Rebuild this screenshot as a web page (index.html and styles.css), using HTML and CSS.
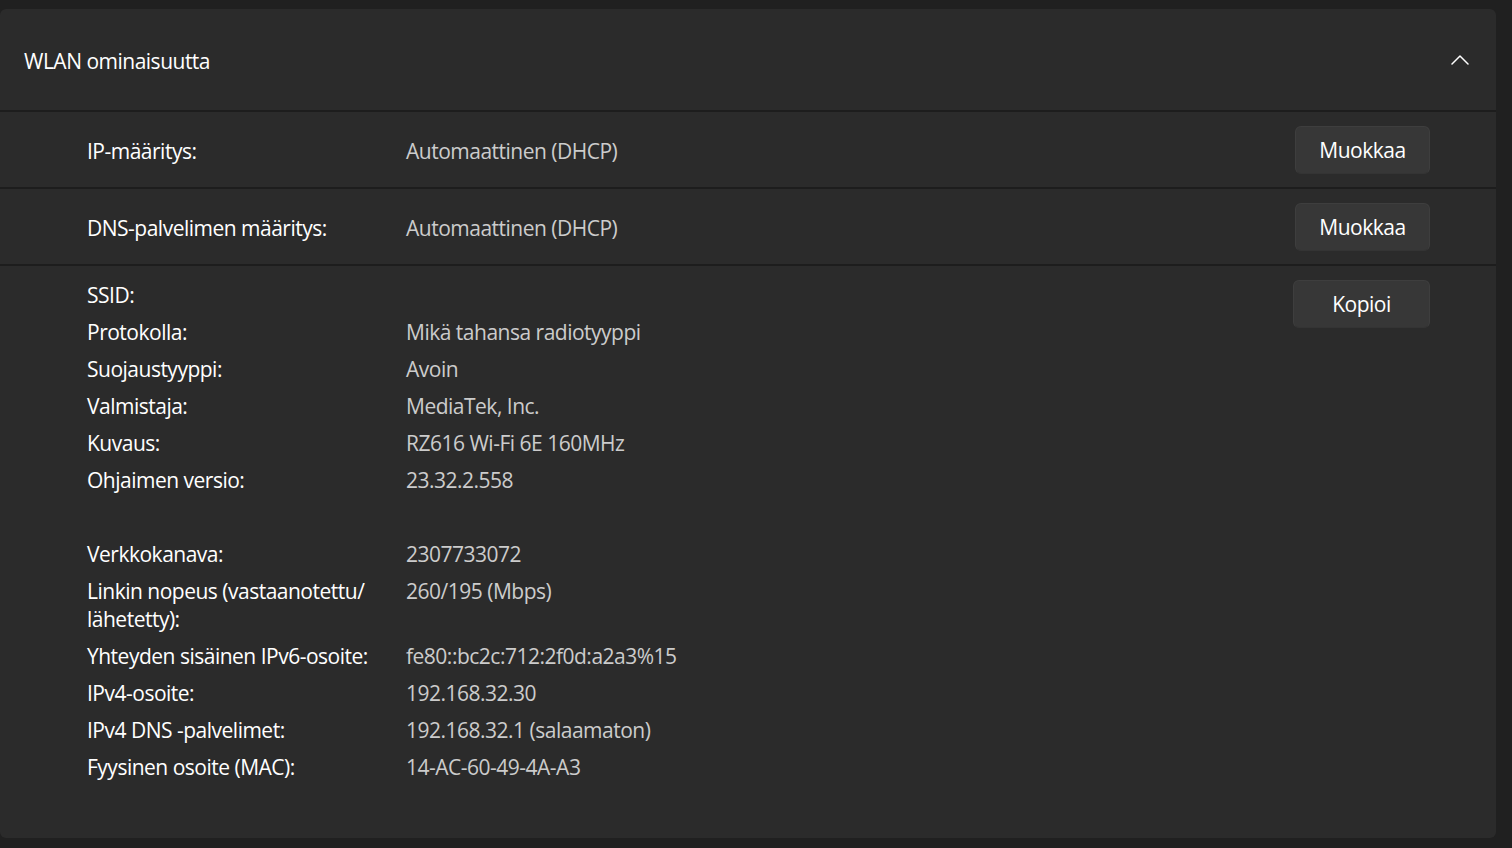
FILE: index.html
```html
<!DOCTYPE html>
<html lang="fi">
<head>
<meta charset="utf-8">
<title>WLAN ominaisuutta</title>
<link rel="stylesheet" href="styles.css">
</head>
<body>
<div class="card">
  <div class="header">
    <span class="title">WLAN ominaisuutta</span>
    <svg class="chevron" width="18" height="10" viewBox="0 0 18 10"><path d="M1 9 L9 1 L17 9" fill="none" stroke="#ffffff" stroke-width="1.5" stroke-linecap="round" stroke-linejoin="round"/></svg>
  </div>
  <div class="row">
    <span class="label">IP-määritys:</span>
    <span class="value">Automaattinen (DHCP)</span>
    <button class="btn">Muokkaa</button>
  </div>
  <div class="row">
    <span class="label">DNS-palvelimen määritys:</span>
    <span class="value">Automaattinen (DHCP)</span>
    <button class="btn">Muokkaa</button>
  </div>
  <div class="details">
    <div class="grid">
      <span class="label">SSID:</span><span class="value"></span>
      <span class="label">Protokolla:</span><span class="value">Mikä tahansa radiotyyppi</span>
      <span class="label">Suojaustyyppi:</span><span class="value">Avoin</span>
      <span class="label">Valmistaja:</span><span class="value">MediaTek, Inc.</span>
      <span class="label">Kuvaus:</span><span class="value">RZ616 Wi-Fi 6E 160MHz</span>
      <span class="label">Ohjaimen versio:</span><span class="value">23.32.2.558</span>
      <span class="label"></span><span class="value"></span>
      <span class="label">Verkkokanava:</span><span class="value">2307733072</span>
      <span class="label">Linkin nopeus (vastaanotettu/ lähetetty):</span><span class="value">260/195 (Mbps)</span>
      <span class="label">Yhteyden sisäinen IPv6-osoite:</span><span class="value">fe80::bc2c:712:2f0d:a2a3%15</span>
      <span class="label">IPv4-osoite:</span><span class="value">192.168.32.30</span>
      <span class="label">IPv4 DNS -palvelimet:</span><span class="value">192.168.32.1 (salaamaton)</span>
      <span class="label">Fyysinen osoite (MAC):</span><span class="value">14-AC-60-49-4A-A3</span>
    </div>
    <button class="btn btn-copy">Kopioi</button>
  </div>
</div>
</body>
</html>
```

FILE: styles.css
```css
html, body {
  margin: 0;
  padding: 0;
  background: #202020;
}
body {
  font-family: "Open Sans", "Noto Sans", sans-serif;
  font-size: 21px;
  letter-spacing: -0.5px;
  color: #ffffff;
  height: 848px;
  overflow: hidden;
}
.card {
  margin-top: 9px;
  width: 1496px;
  height: 829px;
  background: #1d1d1d;
  border-radius: 6px;
  overflow: hidden;
  display: flex;
  flex-direction: column;
  gap: 2px;
}
.header {
  height: 101px;
  flex: none;
  background: #2b2b2b;
  display: flex;
  align-items: center;
  justify-content: space-between;
  padding: 0 27px 0 24px;
}
.title {
  color: #ffffff;
  padding-top: 2px;
}
.chevron {
  display: block;
}
.row {
  height: 75px;
  flex: none;
  background: #2b2b2b;
  display: flex;
  align-items: center;
  padding: 0 66px 0 87px;
}
.label {
  color: #ffffff;
  line-height: 28px;
}
.value {
  color: #cccccc;
  line-height: 28px;
}
.row .label,
.row .value {
  padding-top: 2px;
}
.row .label {
  width: 319px;
  flex: none;
}
.row .value {
  flex: 1;
}
.btn {
  font-family: inherit;
  font-size: 21px;
  letter-spacing: -0.5px;
  color: #ffffff;
  background: #373737;
  border: 1px solid #3e3e3e;
  border-bottom-color: #343434;
  border-radius: 6px;
  width: 135px;
  height: 48px;
  padding: 0;
  flex: none;
}
.btn-copy {
  width: 137px;
  margin-top: -1px;
}
.details {
  flex: 1;
  background: #2b2b2b;
  display: flex;
  align-items: flex-start;
  padding: 15px 66px 0 87px;
}
.grid {
  flex: 1;
  display: grid;
  grid-template-columns: 319px 1fr;
  grid-auto-rows: minmax(28px, auto);
  row-gap: 9px;
}
.grid .label {
  padding-right: 24px;
}
```
